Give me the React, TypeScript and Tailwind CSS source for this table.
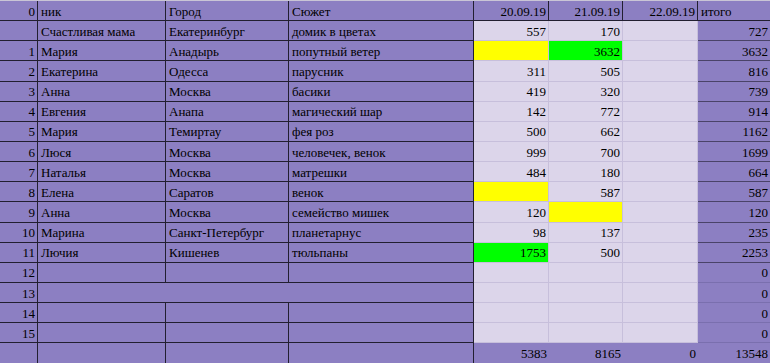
type Fill = 'purple' | 'light' | 'yellow' | 'green';

type Row = {
  num: string;
  nick: string;
  city: string;
  plot: string;
  d1: string;
  d2: string;
  d3: string;
  total: string;
  fills?: [Fill, Fill, Fill];
  merged?: boolean;
};

const rows: Row[] = [
  { num: '', nick: 'Счастливая мама', city: 'Екатеринбург', plot: 'домик в цветах', d1: '557', d2: '170', d3: '', total: '727' },
  { num: '1', nick: 'Мария', city: 'Анадырь', plot: 'попутный ветер', d1: '', d2: '3632', d3: '', total: '3632', fills: ['yellow', 'green', 'light'] },
  { num: '2', nick: 'Екатерина', city: 'Одесса', plot: 'парусник', d1: '311', d2: '505', d3: '', total: '816' },
  { num: '3', nick: 'Анна', city: 'Москва', plot: 'басики', d1: '419', d2: '320', d3: '', total: '739' },
  { num: '4', nick: 'Евгения', city: 'Анапа', plot: 'магический шар', d1: '142', d2: '772', d3: '', total: '914' },
  { num: '5', nick: 'Мария', city: 'Темиртау', plot: 'фея роз', d1: '500', d2: '662', d3: '', total: '1162' },
  { num: '6', nick: 'Люся', city: 'Москва', plot: 'человечек, венок', d1: '999', d2: '700', d3: '', total: '1699' },
  { num: '7', nick: 'Наталья', city: 'Москва', plot: 'матрешки', d1: '484', d2: '180', d3: '', total: '664' },
  { num: '8', nick: 'Елена', city: 'Саратов', plot: 'венок', d1: '', d2: '587', d3: '', total: '587', fills: ['yellow', 'light', 'light'] },
  { num: '9', nick: 'Анна', city: 'Москва', plot: 'семейство мишек', d1: '120', d2: '', d3: '', total: '120', fills: ['light', 'yellow', 'light'] },
  { num: '10', nick: 'Марина', city: 'Санкт-Петербург', plot: 'планетарнус', d1: '98', d2: '137', d3: '', total: '235' },
  { num: '11', nick: 'Лючия', city: 'Кишенев', plot: 'тюльпаны', d1: '1753', d2: '500', d3: '', total: '2253', fills: ['green', 'light', 'light'] },
  { num: '12', nick: '', city: '', plot: '', d1: '', d2: '', d3: '', total: '0' },
  { num: '13', nick: '', city: '', plot: '', d1: '', d2: '', d3: '', total: '0', merged: true },
  { num: '14', nick: '', city: '', plot: '', d1: '', d2: '', d3: '', total: '0' },
  { num: '15', nick: '', city: '', plot: '', d1: '', d2: '', d3: '', total: '0' },
];

const fillClass: Record<Fill, string> = {
  purple: 'bg-[#8c7fc2]',
  light: 'bg-[#dcd5ea]',
  yellow: 'bg-[#ffff00]',
  green: 'bg-[#00ff00]',
};

const cellBase = 'flex h-[20.15px] items-center overflow-hidden whitespace-nowrap pt-[1px]';
const dark = 'border-[#221f30]';

export default function App() {
  return (
    <div className="h-[363px] w-[770px] overflow-hidden bg-white font-[family-name:Liberation_Serif,serif] text-[13px] leading-none text-black">
      <div className="grid grid-cols-[38px_128px_123px_185px_75px_74px_75px_72px] border-t border-[#c9c5d6]">
        {/* header */}
        <div className={`${cellBase} justify-end border-r border-b ${dark} bg-[#8c7fc2] pr-[2px]`}>0</div>
        <div className={`${cellBase} border-r border-b ${dark} bg-[#8c7fc2] pl-[3px]`}>ник</div>
        <div className={`${cellBase} border-r border-b ${dark} bg-[#8c7fc2] pl-[3px]`}>Город</div>
        <div className={`${cellBase} border-r border-b ${dark} bg-[#8c7fc2] pl-[3px]`}>Сюжет</div>
        <div className={`${cellBase} justify-end border-r border-b ${dark} bg-[#8c7fc2] pr-[2px]`}>20.09.19</div>
        <div className={`${cellBase} justify-end border-r border-b ${dark} bg-[#8c7fc2] pr-[2px]`}>21.09.19</div>
        <div className={`${cellBase} justify-end border-r border-b ${dark} bg-[#8c7fc2] pr-[2px]`}>22.09.19</div>
        <div className={`${cellBase} border-b ${dark} bg-[#8c7fc2] pl-[3px]`}>итого</div>

        {rows.map((row, i) => {
          const fills = row.fills ?? ['light', 'light', 'light'];
          const totalLine = i < 12 ? 'border-[#4a4368]' : 'border-[#7a6fae]';
          return (
            <div key={i} className="contents">
              <div className={`${cellBase} justify-end border-r border-b ${dark} bg-[#8c7fc2] pr-[2px]`}>{row.num}</div>
              {row.merged ? (
                <div className={`${cellBase} col-span-3 border-r border-b ${dark} bg-[#8c7fc2]`} />
              ) : (
                <>
                  <div className={`${cellBase} border-r border-b ${dark} bg-[#8c7fc2] pl-[3px]`}>{row.nick}</div>
                  <div className={`${cellBase} border-r border-b ${dark} bg-[#8c7fc2] pl-[3px]`}>{row.city}</div>
                  <div className={`${cellBase} border-r border-b ${dark} bg-[#8c7fc2] pl-[3px]`}>{row.plot}</div>
                </>
              )}
              {[row.d1, row.d2, row.d3].map((v, j) => (
                <div
                  key={j}
                  className={`${cellBase} justify-end border-r border-b border-[#c7bfdb] pr-[2px] ${fillClass[fills[j]]}`}
                >
                  {v}
                </div>
              ))}
              <div className={`${cellBase} justify-end border-b ${totalLine} bg-[#8c7fc2] pr-[2px]`}>{row.total}</div>
            </div>
          );
        })}

        {/* totals */}
        <div className={`${cellBase} border-r border-b ${dark} bg-[#8c7fc2]`} />
        <div className={`${cellBase} border-r border-b ${dark} bg-[#8c7fc2]`} />
        <div className={`${cellBase} border-r border-b ${dark} bg-[#8c7fc2]`} />
        <div className={`${cellBase} border-r border-b ${dark} bg-[#8c7fc2]`} />
        <div className={`${cellBase} justify-end border-b ${dark} bg-[#8c7fc2] pr-[2px]`}>5383</div>
        <div className={`${cellBase} justify-end border-b ${dark} bg-[#8c7fc2] pr-[2px]`}>8165</div>
        <div className={`${cellBase} justify-end border-b ${dark} bg-[#8c7fc2] pr-[2px]`}>0</div>
        <div className={`${cellBase} justify-end border-b ${dark} bg-[#8c7fc2] pr-[2px]`}>13548</div>
      </div>
    </div>
  );
}
